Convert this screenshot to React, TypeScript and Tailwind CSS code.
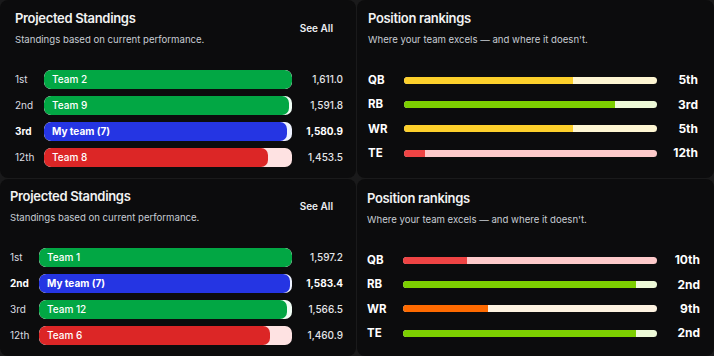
import React from 'react'

type Standing = { rank: string; name: string; score: number; color: 'green' | 'blue' | 'red'; mine?: boolean }
type PosRank = { pos: string; rank: number; color: 'yellow' | 'lime' | 'red' | 'orange' }

const fillColor = {
  green: 'bg-[#02a744]',
  blue: 'bg-[#2535e3]',
  red: 'bg-[#dc2626]',
}
const trackColor = {
  green: 'bg-[#f0fdf4]',
  blue: 'bg-[#eef2ff]',
  red: 'bg-[#fee2e2]',
}
const posFill = {
  yellow: 'bg-[#fdd02b]',
  lime: 'bg-[#7ccf00]',
  red: 'bg-[#ef4444]',
  orange: 'bg-[#ff6a00]',
}
const posTrack = {
  yellow: 'bg-[#fef6d2]',
  lime: 'bg-[#eefad8]',
  red: 'bg-[#fecaca]',
  orange: 'bg-[#fdf2e0]',
}

function ordinal(n: number) {
  if (n % 100 >= 11 && n % 100 <= 13) return `${n}th`
  if (n % 10 === 1) return `${n}st`
  if (n % 10 === 2) return `${n}nd`
  if (n % 10 === 3) return `${n}rd`
  return `${n}th`
}

function StandingsPanel({ rows, compact }: { rows: Standing[]; compact?: boolean }) {
  const max = Math.max(...rows.map((r) => r.score))
  return (
    <div className={`rounded-lg bg-[#0c0c0d] pr-[13px] ${compact ? 'pl-[10px] pt-[7px]' : 'pl-[15px] pt-[8px]'}`}>
      <div className="flex items-center justify-between">
        <div>
          <h2 className="text-[13px] leading-5 font-semibold tracking-tight text-[#f2f2f2]">Projected Standings</h2>
          <p className="mt-1 text-[9.6px] leading-4 text-[#c8ccd4]">Standings based on current performance.</p>
        </div>
        <button className="mr-[10px] text-[10px] font-semibold text-[#eceef2]">See All</button>
      </div>
      <div className="mt-[22px] grid grid-cols-[29px_1fr_51px] items-center gap-y-[7px]">
        {rows.map((r) => (
          <React.Fragment key={r.rank}>
            <span className={`text-[10px] ${r.mine ? 'font-bold text-white' : 'text-[#dcdde2]'}`}>{r.rank}</span>
            <div className={`relative h-[19px] overflow-hidden rounded-[7px] ${trackColor[r.color]}`}>
              <div
                className={`absolute inset-y-0 left-0 rounded-[7px] ${fillColor[r.color]}`}
                style={{ width: `${(r.score / max) * 100}%` }}
              />
              <span
                className={`relative flex h-full items-center pl-2 text-[10px] text-white ${r.mine ? 'font-bold' : 'font-medium'}`}
              >
                {r.name}
              </span>
            </div>
            <span className={`text-right text-[10px] ${r.mine ? 'font-bold text-white' : 'font-medium text-[#e4e5e8]'}`}>
              {r.score.toLocaleString('en-US', { minimumFractionDigits: 1, maximumFractionDigits: 1 })}
            </span>
          </React.Fragment>
        ))}
      </div>
    </div>
  )
}

function PositionPanel({ rows, compact }: { rows: PosRank[]; compact?: boolean }) {
  return (
    <div className={`rounded-lg bg-[#0c0c0d] ${compact ? 'pl-[10px] pr-[14px] pt-[9px]' : 'pl-[11px] pr-[16px] pt-[8px]'}`}>
      <h2 className="text-[13px] leading-5 font-semibold tracking-tight text-[#f2f2f2]">Position rankings</h2>
      <p className="mt-1 text-[9.6px] leading-4 text-[#c8ccd4]">Where your team excels — and where it doesn&apos;t.</p>
      <div className={`mt-[20px] grid items-center ${compact ? 'grid-cols-[36px_1fr_43px]' : 'grid-cols-[36px_1fr_41px]'}`}>
        {rows.map((r) => (
          <React.Fragment key={r.pos}>
            <span className="h-[24.4px] leading-[24.4px] text-[11.5px] font-bold text-white">{r.pos}</span>
            <div className={`relative h-[7px] overflow-hidden rounded-full ${posTrack[r.color]}`}>
              <div
                className={`absolute inset-y-0 left-0 ${posFill[r.color]}`}
                style={{ width: `${((13 - r.rank) / 12) * 100}%` }}
              />
            </div>
            <span className="text-right text-[12px] font-bold text-white">{ordinal(r.rank)}</span>
          </React.Fragment>
        ))}
      </div>
    </div>
  )
}

export default function App() {
  return (
    <div
      className="grid h-[356px] w-[714px] grid-cols-[356px_1fr] grid-rows-[178px_1fr] gap-px bg-[#1a1a1b]"
      style={{ fontFamily: 'Inter, "Noto Sans", sans-serif' }}
    >
      <StandingsPanel
        rows={[
          { rank: '1st', name: 'Team 2', score: 1611.0, color: 'green' },
          { rank: '2nd', name: 'Team 9', score: 1591.8, color: 'green' },
          { rank: '3rd', name: 'My team (7)', score: 1580.9, color: 'blue', mine: true },
          { rank: '12th', name: 'Team 8', score: 1453.5, color: 'red' },
        ]}
      />
      <PositionPanel
        rows={[
          { pos: 'QB', rank: 5, color: 'yellow' },
          { pos: 'RB', rank: 3, color: 'lime' },
          { pos: 'WR', rank: 5, color: 'yellow' },
          { pos: 'TE', rank: 12, color: 'red' },
        ]}
      />
      <StandingsPanel
        compact
        rows={[
          { rank: '1st', name: 'Team 1', score: 1597.2, color: 'green' },
          { rank: '2nd', name: 'My team (7)', score: 1583.4, color: 'blue', mine: true },
          { rank: '3rd', name: 'Team 12', score: 1566.5, color: 'green' },
          { rank: '12th', name: 'Team 6', score: 1460.9, color: 'red' },
        ]}
      />
      <PositionPanel
        compact
        rows={[
          { pos: 'QB', rank: 10, color: 'red' },
          { pos: 'RB', rank: 2, color: 'lime' },
          { pos: 'WR', rank: 9, color: 'orange' },
          { pos: 'TE', rank: 2, color: 'lime' },
        ]}
      />
    </div>
  )
}
